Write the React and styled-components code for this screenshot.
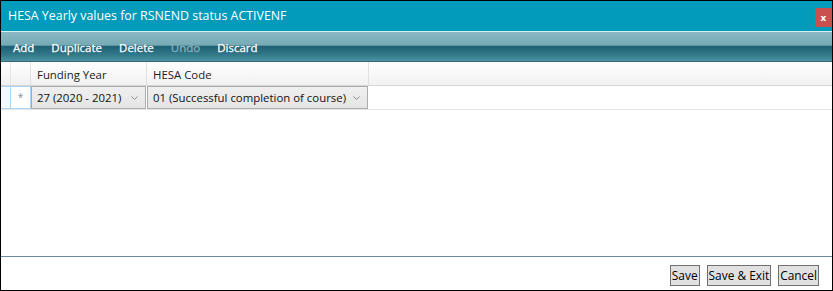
import styled, { createGlobalStyle } from "styled-components";

const GlobalStyle = createGlobalStyle`
  html, body { margin: 0; padding: 0; background: #fff; }
  body { font-family: "Open Sans", "Noto Sans", sans-serif; }
`;

const columns = [
  { title: "Funding Year", value: "27 (2020 - 2021)", width: 116 },
  { title: "HESA Code", value: "01 (Successful completion of course)", width: 222 },
];

const toolbarItems = [
  { label: "Add" },
  { label: "Duplicate" },
  { label: "Delete" },
  { label: "Undo", disabled: true },
  { label: "Discard" },
];

function Chevron() {
  return (
    <svg width="7" height="4" viewBox="0 0 7 4">
      <path d="M0.5 0.5 L3.5 3.5 L6.5 0.5" fill="none" stroke="#8a8a8a" strokeWidth="1" />
    </svg>
  );
}

function App() {
  return (
    <Window>
      <GlobalStyle />
      <TitleBar>
        <Title>HESA Yearly values for RSNEND status ACTIVENF</Title>
        <CloseButton>x</CloseButton>
      </TitleBar>
      <Toolbar>
        {toolbarItems.map((item) => (
          <ToolButton key={item.label} disabled={item.disabled}>
            {item.label}
          </ToolButton>
        ))}
      </Toolbar>
      <GridArea>
        <HeaderRow>
          <IndicatorHead />
          <StarHead />
          {columns.map((c) => (
            <HeadCell key={c.title} $w={c.width}>
              {c.title}
            </HeadCell>
          ))}
        </HeaderRow>
        <DataRow>
          <Indicator />
          <StarCell>*</StarCell>
          {columns.map((c) => (
            <Combo key={c.title} $w={c.width}>
              <span>{c.value}</span>
              <Chevron />
            </Combo>
          ))}
        </DataRow>
      </GridArea>
      <Footer>
        <Button>Save</Button>
        <Button>Save &amp; Exit</Button>
        <Button>Cancel</Button>
      </Footer>
    </Window>
  );
}

const Window = styled.div`
  box-sizing: border-box;
  width: 833px;
  height: 291px;
  border: 1px solid #000;
  display: flex;
  flex-direction: column;
  overflow: hidden;
`;

const TitleBar = styled.div`
  height: 30px;
  flex-shrink: 0;
  background: #039bbb;
  display: flex;
  align-items: center;
  justify-content: space-between;
  padding-left: 7px;
`;

const Title = styled.div`
  color: #fff;
  font-size: 12.4px;
  margin-top: -2px;
`;

const CloseButton = styled.div`
  width: 17px;
  height: 19px;
  background: #c9504f;
  color: #fff;
  font-family: "DejaVu Sans", sans-serif;
  font-weight: bold;
  font-size: 9px;
  display: flex;
  align-items: center;
  justify-content: center;
  align-self: flex-start;
  margin-top: 7px;
`;

const Toolbar = styled.div`
  height: 29px;
  flex-shrink: 0;
  border-top: 1px solid #d8f0f4;
  border-bottom: 1px solid #3c6676;
  background: linear-gradient(
    to bottom,
    #8cb9c3 0%,
    #76aab5 45%,
    #1f6176 50%,
    #2f7587 75%,
    #4a93a1 100%
  );
  display: flex;
  align-items: center;
  gap: 17px;
  padding-left: 12px;
`;

const ToolButton = styled.div`
  color: ${(p) => (p.disabled ? "#8fb2bc" : "#fff")};
  font-size: 11.5px;
  font-weight: 400;
  -webkit-text-stroke: 0.25px currentColor;
  margin-top: 1px;
`;

const GridArea = styled.div`
  flex: 1;
  background: #fff;
  border-bottom: 1px solid #6f8aa8;
`;

const HeaderRow = styled.div`
  display: flex;
  height: 23px;
  background: linear-gradient(to bottom, #ffffff 0%, #f1f1f2 100%);
  border-bottom: 1px solid #d5d5d5;
  font-size: 11.4px;
  color: #222;
`;

const IndicatorHead = styled.div`
  width: 9px;
  border-right: 1px solid #e6e6e6;
`;

const StarHead = styled.div`
  width: 19px;
  border-right: 1px solid #e0e0e0;
`;

const HeadCell = styled.div`
  box-sizing: border-box;
  width: ${(p) => p.$w}px;
  border-right: 1px solid #e0e0e0;
  display: flex;
  align-items: center;
  padding-left: 6px;
  padding-top: 2px;
`;

const DataRow = styled.div`
  display: flex;
  height: 23px;
  border-bottom: 1px solid #e6e6e6;
  font-size: 11.4px;
  color: #111;
`;

const Indicator = styled.div`
  box-sizing: border-box;
  width: 10px;
  background: #f2f9ff;
  border: 1px solid #a9d4f3;
  border-left: none;
`;

const StarCell = styled.div`
  box-sizing: border-box;
  width: 20px;
  border: 1px solid #a9d4f3;
  border-left: none;
  color: #8090a0;
  font-size: 10px;
  display: flex;
  justify-content: center;
  align-items: center;
  padding-bottom: 2px;
`;

const Combo = styled.div`
  box-sizing: border-box;
  width: ${(p) => p.$w - 1}px;
  height: 23px;
  margin-right: 1px;
  background: linear-gradient(to bottom, #efefef, #e5e5e5);
  border: 1px solid #acacac;
  display: flex;
  align-items: center;
  justify-content: space-between;
  padding: 0 7px 0 5px;
  white-space: nowrap;
`;

const Footer = styled.div`
  height: 33px;
  flex-shrink: 0;
  display: flex;
  justify-content: flex-end;
  align-items: center;
  gap: 7px;
  padding-right: 13px;
`;

const Button = styled.div`
  height: 21px;
  box-sizing: border-box;
  padding: 0 1px;
  background: #e1e1e1;
  border: 1px solid #707070;
  font-size: 11.9px;
  color: #000;
  display: flex;
  align-items: center;
  margin-top: 3px;
`;

export default App;
